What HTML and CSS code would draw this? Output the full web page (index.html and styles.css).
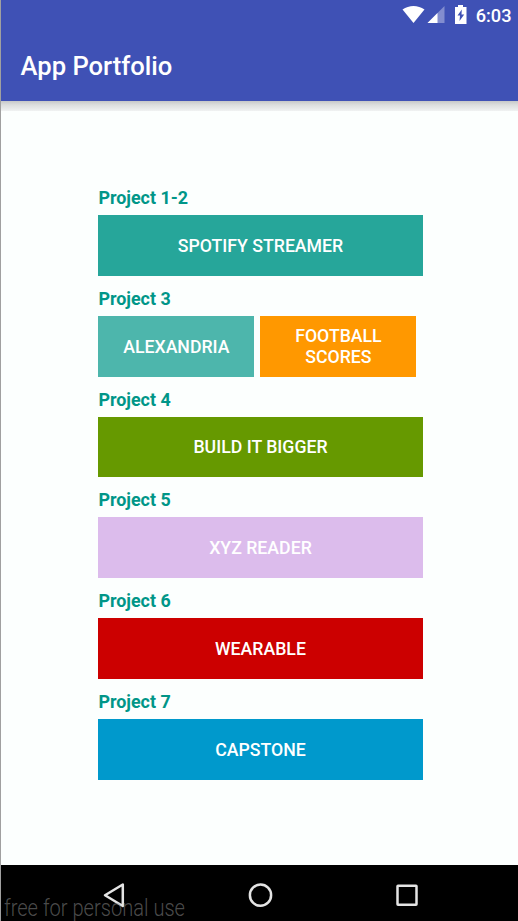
FILE: index.html
```
<!DOCTYPE html>
<html lang="en">
<head>
<meta charset="utf-8">
<title>App Portfolio</title>
<link rel="stylesheet" href="styles.css">
</head>
<body>
<div class="screen">
  <header class="app-header">
    <div class="status-bar">
      <svg class="status-icons" width="70" height="24" viewBox="0 0 70 24">
        <path d="M3.500 9.500C10 4.700 19 4.700 25.500 9.500L14.500 23z" fill="#fff"/>
        <path d="M45.500 6v17H28.500z" fill="#fff" fill-opacity=".35"/>
        <path d="M38.500 13v10H28.500z" fill="#fff"/>
        <path d="M56 7h3V5h5v2h3.500v17H56z" fill="#fff"/>
        <path d="M62.800 9.500L58.500 15.500h2.500L60.500 21L65.200 14.500h-2.700z" fill="#3f51b5"/>
      </svg>
      <span class="clock">6:03</span>
    </div>
    <h1 class="app-title">App Portfolio</h1>
  </header>
  <main class="content">
    <section class="project">
      <h2 class="label">Project 1-2</h2>
      <div class="row"><button class="btn streamer">SPOTIFY STREAMER</button></div>
    </section>
    <section class="project">
      <h2 class="label">Project 3</h2>
      <div class="row pair">
        <button class="btn alexandria">ALEXANDRIA</button>
        <button class="btn football">FOOTBALL SCORES</button>
      </div>
    </section>
    <section class="project">
      <h2 class="label">Project 4</h2>
      <div class="row"><button class="btn bigger">BUILD IT BIGGER</button></div>
    </section>
    <section class="project">
      <h2 class="label">Project 5</h2>
      <div class="row"><button class="btn reader">XYZ READER</button></div>
    </section>
    <section class="project">
      <h2 class="label">Project 6</h2>
      <div class="row"><button class="btn wearable">WEARABLE</button></div>
    </section>
    <section class="project">
      <h2 class="label">Project 7</h2>
      <div class="row"><button class="btn capstone">CAPSTONE</button></div>
    </section>
  </main>
  <nav class="nav-bar">
    <svg width="26" height="26" viewBox="0 0 26 26"><path d="M22.800 2.500v21.500L5 13.200z"/></svg>
    <svg width="26" height="26" viewBox="0 0 26 26"><circle cx="13.500" cy="13.200" r="10.600"/></svg>
    <svg width="26" height="26" viewBox="0 0 26 26"><rect x="3.500" y="3.700" width="19" height="19" rx=".5"/></svg>
    <span class="watermark">free for personal use</span>
  </nav>
</div>
</body>
</html>
```

FILE: styles.css
```
* { box-sizing: border-box; }

body {
  margin: 0;
  font-family: Roboto, "Liberation Sans", sans-serif;
}

.screen {
  display: flex;
  flex-direction: column;
  width: 518px;
  height: 921px;
  overflow: hidden;
  border-left: 1px solid #a0a0a0;
  background: #fcfffe;
}

.app-header {
  flex: none;
  height: 101px;
  background: #3f51b5;
  color: #fff;
}

.status-bar {
  display: flex;
  justify-content: flex-end;
  gap: 8px;
  height: 31px;
  padding-right: 6.500px;
}

.status-icons {
  margin-right: -1px;
}

.clock {
  font-size: 18.200px;
  line-height: 32px;
  font-weight: 500;
}

.app-title {
  margin: 0 0 0 19.500px;
  font-size: 25.600px;
  font-weight: 500;
  line-height: 70px;
}

.content {
  flex: 1;
  padding: 86px 0 0 97.400px;
  background: linear-gradient(#c6c8c8, #dcdede 4px, #f0f2f2 10px, #fcfffe 10px) no-repeat;
  background-size: 100% 11px;
}

.project {
  width: 324.200px;
  height: 100.800px;
}

.label {
  height: 28px;
  margin: 0;
  color: #009688;
  font-size: 17.900px;
  font-weight: 700;
  line-height: 22.800px;
}

.row {
  display: flex;
  height: 60.800px;
}

.pair {
  gap: 6.200px;
  padding-right: 6.200px;
}

.btn {
  flex: 1 1 0;
  min-width: 0;
  padding: 2px 20px 0;
  border: 0;
  color: #fff;
  font-family: inherit;
  font-size: 17.700px;
  font-weight: 500;
  line-height: 21px;
}

.streamer { background: #26a69a; }
.alexandria { background: #4db6ac; }
.football { background: #ff9800; }
.bigger { background: #669900; }
.reader { background: #dcbcec; }
.wearable { background: #cc0000; }
.capstone { background: #0099cc; }

.nav-bar {
  position: relative;
  display: flex;
  flex: none;
  justify-content: space-between;
  height: 56px;
  padding: 17px 98px 0 99px;
  background: #000;
}

.nav-bar svg {
  fill: none;
  stroke: #e4e4e4;
  stroke-width: 2.500;
  stroke-linejoin: round;
}

.watermark {
  position: absolute;
  left: 3px;
  top: 30px;
  color: rgba(140, 140, 140, .55);
  font-size: 23px;
  font-weight: 300;
  line-height: 27px;
  white-space: nowrap;
  transform: scaleX(.873);
  transform-origin: left;
}
```
